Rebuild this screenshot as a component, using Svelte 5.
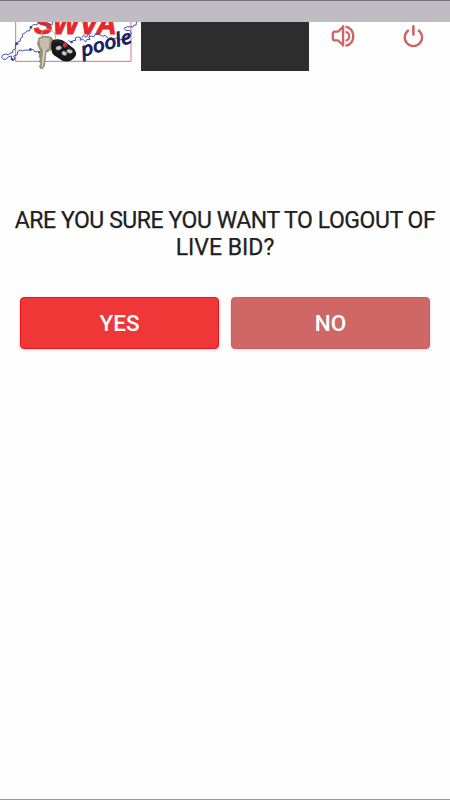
<script lang="ts">
	let muted = false;
	let answer = '';
</script>

<div class="screen">
	<div class="status"></div>

	<header>
		<svg class="logo" viewBox="0 66 420 147" role="img" aria-label="SWVA Poole">
			<path d="M47 60V184H393V60" fill="none" stroke="#e57373" stroke-width="3" />
			<text class="swva" x="102" y="102" textLength="248" lengthAdjust="spacingAndGlyphs">SWVA</text>
			<g fill="none" stroke="#4a51a8" stroke-width="3" stroke-linejoin="round">
				<path
					d="M158 66L156 75 146 71 138 75 128 70 118 69 108 75 101 73 92 81 89 92 80 93 75 99 67 103 68 111 61 115 61 123 53 126 54 133 46 135 46 147 38 151 38 158 30 159 25 165 18 162 8 165 5 172 10 178 18 178 24 171 35 168 33 178 40 182 45 177 41 168 52 164 53 155 60 150 67 153 75 150 84 151 92 147 100 149 105 156 112 153 118 158 128 154"
				/>
				<path
					d="M205 121L214 128 219 121 227 122 226 114 233 111 242 113 240 121 248 117 257 126 261 118 270 119 266 111 274 108 281 111 285 103 300 104 307 109 315 106 325 115 335 113 341 118 350 114 362 119 372 117 379 112 388 109 394 100 389 91 378 92 372 85 382 80 399 81 401 76 408 75 410 64M246 113L251 106 259 112 265 103 271 108"
				/>
			</g>
			<g fill="#39429c">
				<circle cx="93" cy="82" r="4" />
				<circle cx="49" cy="131" r="4" />
				<circle cx="91" cy="149" r="4" />
				<circle cx="37" cy="178" r="4" />
				<circle cx="215" cy="126" r="4" />
				<circle cx="118" cy="157" r="4" />
			</g>
			<g>
				<path d="M128 108c-8-14 4-22 18-19 14 2 22 11 20 27" fill="none" stroke="#aaa89e" stroke-width="3" />
				<path
					d="M115 114q15-12 39-3l7 9-2 27-20 11-4 40-7 9-6 0-5-7 4-10-5-5 4-9-4-5 4-19-9-19z"
					fill="#989077"
				/>
				<path d="M118 117q14-8 31-2l-3 32-16 6-10-16z" fill="#c5bea8" />
				<path d="M129 149l8-2-8 52-4 4z" fill="#d8d2bf" />
				<path
					d="M154 131q1-13 17-13 14-1 25 8l26 20q12 15 1 27-13 16-36 9l-26-17q-10-12-7-34z"
					fill="#171719"
				/>
				<path d="M160 129q4-9 20-5l31 23" fill="none" stroke="#55555b" stroke-width="2" />
				<g stroke="#5d615f" stroke-width="1">
					<ellipse cx="176" cy="144" rx="9" ry="6" transform="rotate(-15 176 144)" fill="#c4ccc4" />
					<ellipse cx="195" cy="135" rx="6" ry="8" transform="rotate(25 195 135)" fill="#df2937" />
					<ellipse cx="193" cy="160" rx="8" ry="6" transform="rotate(25 193 160)" fill="#c4ccc4" />
					<ellipse cx="209" cy="154" rx="9" ry="6" transform="rotate(15 209 154)" fill="#c4ccc4" />
				</g>
			</g>
			<text class="poole" x="248" y="170" transform="rotate(-16 248 170)" textLength="156" lengthAdjust="spacingAndGlyphs">poole</text>
		</svg>

		<div class="banner"></div>

		<div class="actions">
			<button class="icon" aria-label="Sound" on:click={() => (muted = !muted)}>
				<svg viewBox="0 0 24 24" width="24" height="24">
					<path d="M12.1 1.2v21.3M11.8 3.2L7 7.7H3.8Q1.8 7.7 1.8 10v4.3q0 2.1 2 2.1H7l4.8 4.6" stroke-width="2.3" />
					{#if !muted}
						<path d="M14.5 7.7c5 1.2 5 7.8 0 9" stroke-width="2.2" />
						<path d="M14.5 2.7c10.4 1.1 10.4 17.9 0 19" stroke-width="2.4" />
					{/if}
				</svg>
			</button>
			<button class="icon" aria-label="Logout" on:click={() => (answer = '')}>
				<svg viewBox="0 0 24 24" width="24" height="24">
					<path d="M12.4 2.4V10.6" stroke-width="2.6" stroke-linecap="round" />
					<path d="M7.8 6a8.7 8.7 0 1 0 9.2 0" stroke-width="2.3" />
				</svg>
			</button>
		</div>
	</header>

	<main>
		<h1><span class="first">ARE YOU SURE YOU WANT TO LOGOUT OF</span><br /><span>LIVE BID?</span></h1>
		<div class="buttons">
			<button class="yes" on:click={() => (answer = 'yes')}>YES</button>
			<button class="no" on:click={() => (answer = 'no')}>NO</button>
		</div>
	</main>
</div>

<style>
	:global(body) {
		margin: 0;
		background: #fefefe;
	}

	.screen {
		box-sizing: border-box;
		height: 800px;
		overflow: hidden;
		border-bottom: 1px solid #999;
		font-family: Roboto, sans-serif;
	}

	.status {
		box-sizing: border-box;
		height: 22px;
		background: #bfbdc3;
		border-top: 1px solid #77757c;
	}

	header {
		display: grid;
		grid-template-columns: 141px 168px 1fr;
		height: 49px;
	}

	.logo {
		width: 140px;
		height: 49px;
	}

	.swva {
		font: italic bold 90px 'Liberation Sans', sans-serif;
		fill: #e9262b;
		stroke: #e9262b;
		stroke-width: 3px;
	}

	.poole {
		font: italic 56px 'Open Sans', sans-serif;
		fill: #17205f;
		stroke: #17205f;
		stroke-width: 3px;
	}

	.banner {
		background: #2d2d2d;
	}

	.actions {
		display: flex;
		gap: 46px;
		padding: 2px 0 0 22px;
	}

	.icon {
		width: 24px;
		height: 24px;
		padding: 0;
		border: 0;
		background: none;
	}

	.icon svg {
		display: block;
		fill: none;
		stroke: #d16364;
	}

	main {
		padding: 136px 0 0;
	}

	h1 {
		margin: 0;
		color: #202020;
		font-size: 23px;
		font-weight: 400;
		line-height: 27px;
		text-align: center;
		white-space: nowrap;
		-webkit-text-stroke: 0.25px #202020;
	}

	.first {
		letter-spacing: -0.43px;
	}

	.buttons {
		display: grid;
		grid-template-columns: 1fr 1fr;
		gap: 12px;
		padding: 36px 20px 0;
	}

	.buttons button {
		height: 52px;
		padding: 0;
		border: 1px solid #cf5a5c;
		border-radius: 4px;
		background: #cf6767;
		box-shadow: 0 1px 2px 1px #fbe9e9;
		color: #fff;
		font: 500 22.5px Roboto, sans-serif;
	}

	.buttons .yes {
		border-color: #f01015;
		background: #ef3737;
	}
</style>
